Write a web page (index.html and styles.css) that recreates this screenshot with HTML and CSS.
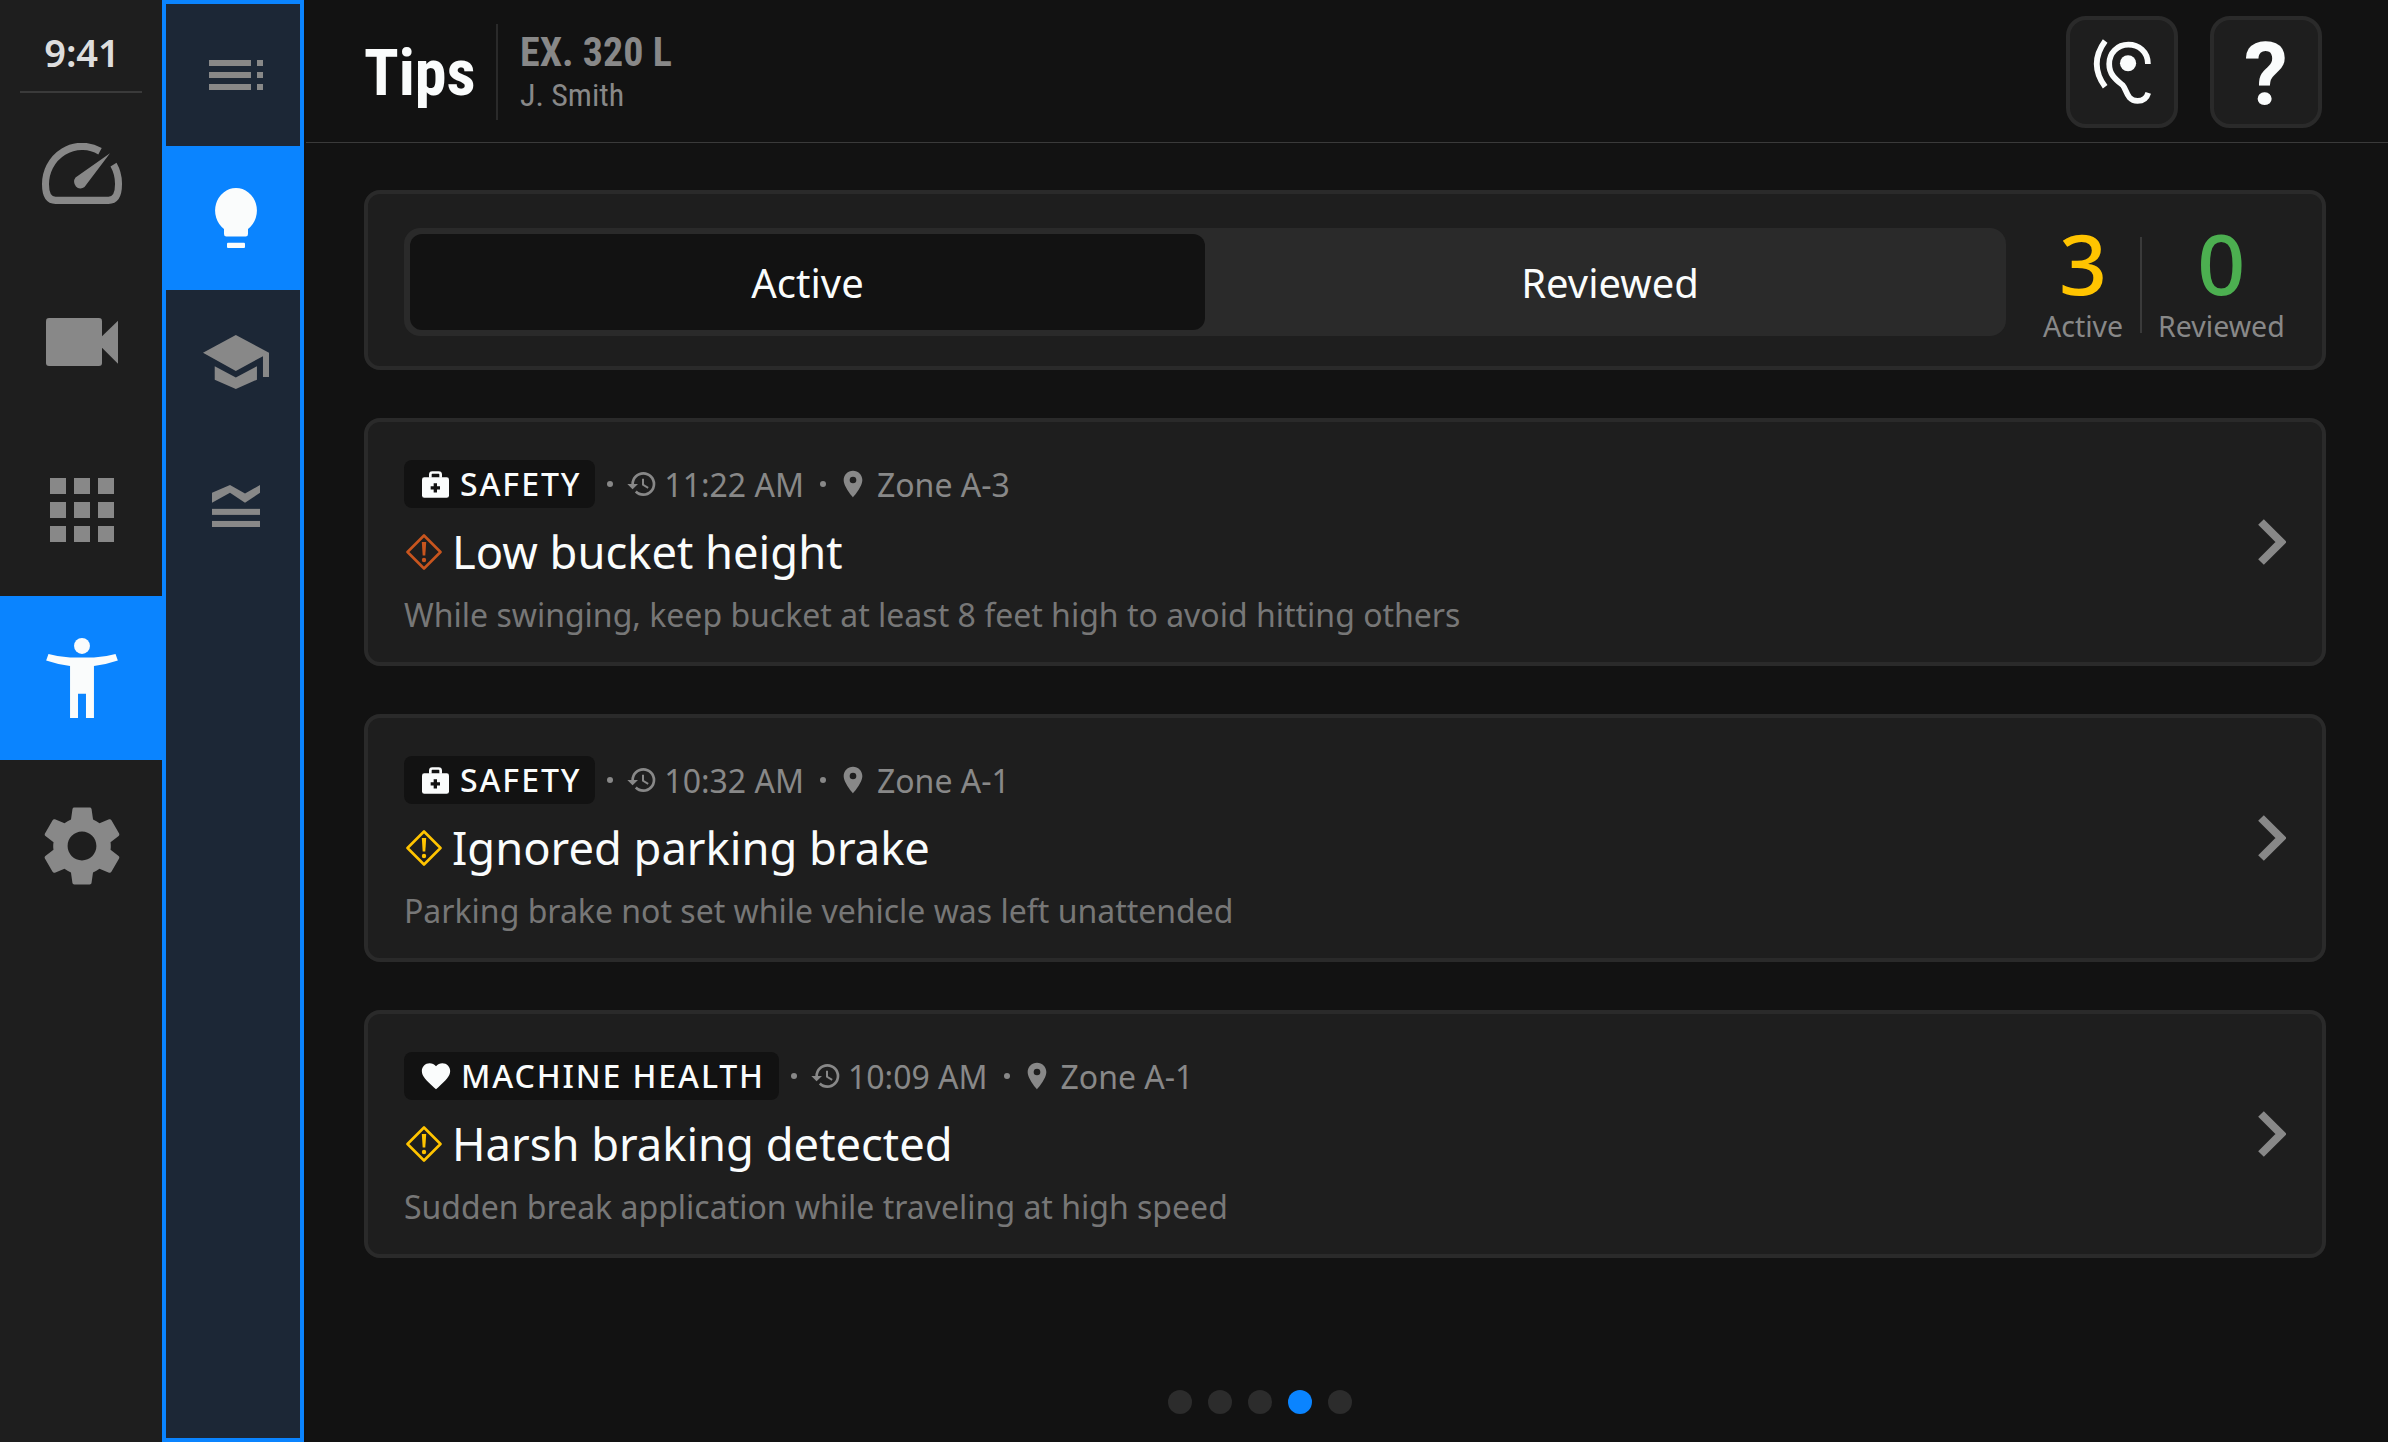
FILE: index.html
```html
<!DOCTYPE html>
<html>
  <head>
    <title>Tips</title>
    <link rel="stylesheet" href="styles.css">
  </head>
  <body>
    <svg class="icon-defs" width="0" height="0">
      <symbol id="i-case" viewBox="82 50 81 80">
        <path d="M107 70V60a6 6 0 0 1 6-6h19a6 6 0 0 1 6 6v10" fill="none" stroke="#fafcfc" stroke-width="8"/>
        <rect x="82" y="68" width="81" height="62" rx="7" fill="#fafcfc"/>
        <path d="M117 86h10v9h9v10h-9v9h-10v-9h-9V95h9z" fill="#121212"/>
      </symbol>
      <symbol id="i-heart" viewBox="0 0 24 24">
        <path fill="#fafcfc" d="M12 21.35l-1.45-1.32C5.4 15.36 2 12.28 2 8.5 2 5.42 4.42 3 7.5 3c1.74 0 3.41.81 4.5 2.09C13.09 3.81 14.76 3 16.5 3 19.58 3 22 5.42 22 8.5c0 3.78-3.4 6.86-8.55 11.54L12 21.35z"/>
      </symbol>
      <symbol id="i-history" viewBox="0 0 24 24">
        <path fill="#888" d="M13 3a9 9 0 0 0-9 9H1l3.89 3.89.07.14L9 12H6c0-3.87 3.13-7 7-7s7 3.13 7 7-3.13 7-7 7c-1.93 0-3.68-.79-4.94-2.06l-1.42 1.42A8.954 8.954 0 0 0 13 21a9 9 0 0 0 0-18zm-1 5v5l4.28 2.54.72-1.21-3.5-2.08V8H12z"/>
      </symbol>
      <symbol id="i-pin" viewBox="0 0 24 24">
        <path fill="#888" d="M12 2C8.13 2 5 5.13 5 9c0 5.25 7 13 7 13s7-7.75 7-13c0-3.87-3.13-7-7-7zm0 9.5a2.5 2.5 0 0 1 0-5 2.5 2.5 0 0 1 0 5z"/>
      </symbol>
      <symbol id="i-warn" viewBox="0 0 36 36">
        <path d="M18 1.5L34.5 18 18 34.5 1.5 18z" fill="none" stroke="currentColor" stroke-width="2.6" stroke-linejoin="round"/>
        <path d="M15.8 8h4.4l-.9 13.5h-2.6z" fill="currentColor"/>
        <circle cx="18" cy="26" r="2.2" fill="currentColor"/>
      </symbol>
      <symbol id="i-chevron" viewBox="0 0 28 46">
        <path d="M3 3l20 20L3 43" fill="none" stroke="#888" stroke-width="8"/>
      </symbol>
    </svg>

    <div class="rail">
      <div class="clock">9:41</div>
      <div class="rail-group">
        <div class="rail-item">
          <svg width="80" height="62" viewBox="0 0 80 60" preserveAspectRatio="none">
            <path d="M58 8A36.500 36.500 0 0 0 3.500 40q0 15.500 10 15.500h53q10 0 10-15.500a36.500 36.500 0 0 0-5-19" fill="none" stroke="#888" stroke-width="7"/>
            <path d="M68 10L42.500 42.500a6.400 6.400 0 0 1-9-9z" fill="#888"/>
          </svg>
        </div>
        <div class="rail-item">
          <svg width="72" height="48" viewBox="0 0 72 45" preserveAspectRatio="none">
            <rect width="56" height="45" rx="3" fill="#888"/>
            <path d="M56 17L72 2.500V43L56 28z" fill="#888"/>
          </svg>
        </div>
        <div class="rail-item">
          <svg width="64" height="64" viewBox="0 0 64 64" fill="#888">
            <rect width="16" height="16"/><rect x="24" width="16" height="16"/><rect x="48" width="16" height="16"/>
            <rect y="24" width="16" height="16"/><rect x="24" y="24" width="16" height="16"/><rect x="48" y="24" width="16" height="16"/>
            <rect y="48" width="16" height="16"/><rect x="24" y="48" width="16" height="16"/><rect x="48" y="48" width="16" height="16"/>
          </svg>
        </div>
      </div>
      <div class="rail-active">
        <svg width="72" height="80" viewBox="138 234 216 241" fill="#fafcfc">
          <circle cx="246" cy="258" r="24"/>
          <path d="M145 282q32 9 65 11h72q33-2 65-11l7 20q-34 12-72 16v157h-24v-73h-24v73h-24V318q-38-4-72-16z"/>
        </svg>
      </div>
      <div class="rail-item rail-gear">
        <svg width="96" height="96" viewBox="0 0 24 24">
          <path fill="#888" d="M19.140 12.940c.04-.3.06-.61.06-.94 0-.32-.02-.64-.07-.94l2.030-1.580c.18-.14.23-.41.12-.61l-1.920-3.320c-.12-.22-.37-.29-.59-.22l-2.390.96c-.5-.38-1.030-.7-1.620-.94l-.36-2.540c-.04-.24-.24-.41-.48-.41h-3.840c-.24 0-.43.17-.47.41l-.36 2.540c-.59.24-1.130.57-1.620.94l-2.390-.96c-.22-.08-.47 0-.59.22L2.740 8.870c-.12.21-.08.47.12.61l2.030 1.580c-.05.3-.09.63-.09.94s.02.64.07.94l-2.030 1.580c-.18.14-.23.41-.12.61l1.920 3.320c.12.22.37.29.59.22l2.390-.96c.5.38 1.030.7 1.620.94l.36 2.540c.05.24.24.41.48.41h3.840c.24 0 .44-.17.47-.41l.36-2.540c.59-.24 1.130-.56 1.620-.94l2.390.96c.22.08.47 0 .59-.22l1.920-3.320c.12-.22.07-.47-.12-.61l-2.010-1.580zM12 15.600c-1.980 0-3.600-1.620-3.600-3.600s1.620-3.600 3.600-3.600 3.600 1.620 3.600 3.600-1.620 3.600-3.600 3.600z"/>
        </svg>
      </div>
    </div>

    <div class="subnav">
      <div class="subnav-item subnav-first">
        <svg width="54" height="30" viewBox="0 0 54 30" fill="#888">
          <rect width="42" height="6"/><rect y="12" width="42" height="6"/><rect y="24" width="42" height="6"/>
          <rect x="48" width="6" height="6"/><rect x="48" y="12" width="6" height="6"/><rect x="48" y="24" width="6" height="6"/>
        </svg>
      </div>
      <div class="subnav-item subnav-active">
        <svg width="42" height="60" viewBox="645 525 126 168" preserveAspectRatio="none" fill="#fafcfc">
          <path d="M708 525a63 63 0 0 1 36 114.500V654q0 7-7 7h-58q-7 0-7-7v-14.500A63 63 0 0 1 708 525z"/>
          <rect x="681" y="678" width="54" height="15" rx="3"/>
        </svg>
      </div>
      <div class="subnav-item">
        <svg width="66" height="54" viewBox="610 938 197 150" preserveAspectRatio="none" fill="#888">
          <path d="M708 938l99 49v68h-18v-58l-81 41-98-51z"/>
          <path d="M645 1025l63 31 63-31v37l-63 26-63-26z"/>
        </svg>
      </div>
      <div class="subnav-item">
        <svg width="48" height="42" viewBox="636 1358 144 118" preserveAspectRatio="none" fill="#888">
          <path d="M636 1380l54-22 45 24 45-24v22l-45 28-45-28-54 28z"/>
          <rect x="636" y="1425" width="144" height="17"/>
          <rect x="636" y="1459" width="144" height="17"/>
        </svg>
      </div>
    </div>

    <div class="main">
      <div class="header">
        <div class="page-title">Tips</div>
        <div class="header-sub">
          <div class="machine">EX. 320 L</div>
          <div class="operator">J. Smith</div>
        </div>
        <div class="header-btns">
          <div class="round-btn">
            <svg width="58" height="66" viewBox="280 118 172 196" fill="none" stroke="#fafcfc" stroke-width="17">
              <path d="M316 124Q266 192 316 260"/>
              <path d="M443 192C443 155 415 135 385 135C352 135 328 160 328 192C328 225 350 240 368 255C380 268 380 302 412 302C430 302 440 292 444 278"/>
              <circle cx="384" cy="190" r="24" fill="#fafcfc" stroke="none"/>
            </svg>
          </div>
          <div class="round-btn help">?</div>
        </div>
      </div>

      <div class="content">
        <div class="panel summary">
          <div class="segment">
            <div class="seg-tab seg-on">Active</div>
            <div class="seg-tab">Reviewed</div>
          </div>
          <div class="stats">
            <div class="stat">
              <div class="stat-num num-active">3</div>
              <div class="stat-label">Active</div>
            </div>
            <div class="stat stat-last">
              <div class="stat-num num-reviewed">0</div>
              <div class="stat-label">Reviewed</div>
            </div>
          </div>
        </div>

        <div class="panel tip">
          <div class="tip-body">
            <div class="tip-meta">
              <div class="tag"><svg class="tag-icon"><use href="#i-case"/></svg>SAFETY</div>
              <span class="dot"></span>
              <svg class="meta-clock"><use href="#i-history"/></svg>
              <span>11:22 AM</span>
              <span class="dot dot-b"></span>
              <svg class="meta-pin"><use href="#i-pin"/></svg>
              <span>Zone A-3</span>
            </div>
            <div class="tip-title"><svg class="warn warn-high"><use href="#i-warn"/></svg>Low bucket height</div>
            <div class="tip-desc">While swinging, keep bucket at least 8 feet high to avoid hitting others</div>
          </div>
          <svg class="chevron"><use href="#i-chevron"/></svg>
        </div>

        <div class="panel tip">
          <div class="tip-body">
            <div class="tip-meta">
              <div class="tag"><svg class="tag-icon"><use href="#i-case"/></svg>SAFETY</div>
              <span class="dot"></span>
              <svg class="meta-clock"><use href="#i-history"/></svg>
              <span>10:32 AM</span>
              <span class="dot dot-b"></span>
              <svg class="meta-pin"><use href="#i-pin"/></svg>
              <span>Zone A-1</span>
            </div>
            <div class="tip-title"><svg class="warn warn-med"><use href="#i-warn"/></svg>Ignored parking brake</div>
            <div class="tip-desc">Parking brake not set while vehicle was left unattended</div>
          </div>
          <svg class="chevron"><use href="#i-chevron"/></svg>
        </div>

        <div class="panel tip">
          <div class="tip-body">
            <div class="tip-meta">
              <div class="tag"><svg class="tag-heart"><use href="#i-heart"/></svg>MACHINE HEALTH</div>
              <span class="dot"></span>
              <svg class="meta-clock"><use href="#i-history"/></svg>
              <span>10:09 AM</span>
              <span class="dot dot-b"></span>
              <svg class="meta-pin"><use href="#i-pin"/></svg>
              <span>Zone A-1</span>
            </div>
            <div class="tip-title"><svg class="warn warn-med"><use href="#i-warn"/></svg>Harsh braking detected</div>
            <div class="tip-desc">Sudden break application while traveling at high speed</div>
          </div>
          <svg class="chevron"><use href="#i-chevron"/></svg>
        </div>
      </div>

      <div class="pager">
        <span class="pager-dot"></span>
        <span class="pager-dot"></span>
        <span class="pager-dot"></span>
        <span class="pager-dot pager-on"></span>
        <span class="pager-dot"></span>
      </div>
    </div>
  </body>
</html>
```

FILE: styles.css
```css
* {
  box-sizing: border-box;
}
html, body {
  height: 100%;
}
body {
  margin: 0;
  height: 1442px;
  display: flex;
  overflow: hidden;
  font-family: "Noto Sans", sans-serif;
  background-color: #121212;
  color: #fafcfc;
}
.icon-defs {
  position: absolute;
}

.rail {
  width: 162px;
  flex-shrink: 0;
  background-color: #1e1e1e;
  display: flex;
  flex-direction: column;
}
.clock {
  height: 93px;
  flex-shrink: 0;
  margin: 0 20px;
  padding: 37px 0 0 2px;
  border-bottom: 2px solid #3a3a3a;
  text-align: center;
  font-size: 38px;
  line-height: 30px;
  font-weight: 600;
  color: #ddd;
}
.rail-group {
  margin: -3px 0 2px;
}
.rail-item {
  height: 168px;
  padding-left: 2px;
  display: flex;
  align-items: center;
  justify-content: center;
}
.rail-active {
  width: 166px;
  height: 164px;
  background-color: #0a84ff;
  display: flex;
  align-items: center;
  justify-content: center;
  padding-right: 2px;
}
.rail-gear {
  height: 172px;
}

.subnav {
  width: 142px;
  flex-shrink: 0;
  background-color: #1c2736;
  border: 4px solid #0a84ff;
}
.subnav-item {
  height: 144px;
  display: flex;
  align-items: center;
  justify-content: center;
  padding-left: 6px;
}
.subnav-first {
  height: 142px;
}
.subnav-active {
  background-color: #0a84ff;
}

.main {
  flex: 1;
  min-width: 0;
  display: flex;
  flex-direction: column;
  border-left: 2px solid #101010;
}
.header {
  height: 143px;
  flex-shrink: 0;
  border-bottom: 1px solid #3a3a3a;
  display: flex;
  align-items: center;
  padding: 2px 66px 0 58px;
}
.page-title {
  width: 134px;
  height: 96px;
  font-family: Roboto, sans-serif;
  font-stretch: 75%;
  font-size: 64px;
  line-height: 100px;
  font-weight: 700;
  border-right: 2px solid #2a2a2a;
}
.header-sub {
  margin-left: 22px;
  font-family: Roboto, sans-serif;
  font-stretch: 75%;
  color: #888;
}
.machine {
  font-size: 40px;
  line-height: 46px;
  font-weight: 700;
}
.operator {
  font-size: 32px;
  line-height: 38px;
}
.header-btns {
  margin-left: auto;
  display: flex;
  gap: 32px;
}
.round-btn {
  width: 112px;
  height: 112px;
  background-color: #1e1e1e;
  border: 4px solid #2a2a2a;
  border-radius: 20px;
  display: flex;
  align-items: center;
  justify-content: center;
}
.help {
  padding-top: 2px;
  font-family: Roboto, sans-serif;
  font-size: 88px;
  font-weight: 700;
}

.content {
  padding: 47px 62px 0 58px;
  display: flex;
  flex-direction: column;
  gap: 48px;
}
.panel {
  background-color: #1e1e1e;
  border: 4px solid #2a2a2a;
  border-radius: 16px;
  display: flex;
}
.summary {
  height: 180px;
  padding: 34px 0 0 36px;
}
.segment {
  width: 1602px;
  height: 108px;
  padding: 6px 0 6px 6px;
  display: flex;
  gap: 6px;
  background-color: #2a2a2a;
  border-radius: 16px;
}
.seg-tab {
  width: 795px;
  display: flex;
  align-items: center;
  justify-content: center;
  font-size: 40px;
  border-radius: 12px;
}
.seg-tab + .seg-tab {
  padding-left: 3px;
}
.seg-on {
  background-color: #121212;
}
.stats {
  display: flex;
  margin-left: 20px;
}
.stat {
  height: 96px;
  margin-top: 9px;
  padding: 0 17px 0 17px;
  border-right: 2px solid #3a3a3a;
  text-align: center;
}
.stat-last {
  border-right: 0;
  padding-left: 16px;
}
.stat-num {
  height: 60px;
  margin-top: -4px;
  font-size: 84px;
  line-height: 60px;
  font-weight: 500;
}
.num-active {
  color: #ffc400;
}
.num-reviewed {
  color: #4caf50;
}
.stat-label {
  margin-top: 18px;
  font-size: 28.5px;
  line-height: 30px;
  color: #888;
}

.tip {
  height: 248px;
  padding: 38px 36px 0 36px;
}
.tip-body {
  flex: 1;
}
.tip-meta {
  height: 48px;
  display: flex;
  align-items: center;
  font-size: 32px;
  color: #888;
}
.tag {
  height: 48px;
  display: flex;
  align-items: center;
  padding: 0 14px 2px 18px;
  margin-right: 12px;
  background-color: #121212;
  border-radius: 8px;
  color: #fafcfc;
  font-size: 32px;
  font-weight: 500;
  letter-spacing: 1.9px;
}
.tag-icon {
  width: 27px;
  height: 27px;
  margin: 2px 11px 0 0;
}
.tag-heart {
  width: 34px;
  height: 34px;
  margin: 2px 8px 0 -3px;
}
.dot {
  width: 6px;
  height: 6px;
  border-radius: 50%;
  background-color: #888;
  margin-right: 14px;
}
.dot-b {
  margin: 0 11px 0 16px;
}
.meta-clock {
  width: 32px;
  height: 32px;
  margin: 0 6px 0 -1px;
}
.meta-pin {
  width: 32px;
  height: 32px;
  margin-right: 8px;
}
.tip-title {
  height: 60px;
  margin-top: 14px;
  display: flex;
  align-items: center;
  font-size: 45.3px;
  line-height: 60px;
}
.warn {
  width: 36px;
  height: 36px;
  margin: 0 10px 0 2px;
}
.warn-high {
  color: #c8551e;
}
.warn-med {
  color: #ffc400;
}
.tip-desc {
  margin-top: 11px;
  font-size: 32px;
  line-height: 44px;
  color: #777;
}
.chevron {
  width: 28px;
  height: 46px;
  margin-top: 59px;
  flex-shrink: 0;
}

.pager {
  position: absolute;
  left: 1168px;
  top: 1390px;
  display: flex;
  gap: 16px;
}
.pager-dot {
  width: 24px;
  height: 24px;
  border-radius: 50%;
  background-color: #2c2c2c;
}
.pager-on {
  background-color: #0a84ff;
}
```
